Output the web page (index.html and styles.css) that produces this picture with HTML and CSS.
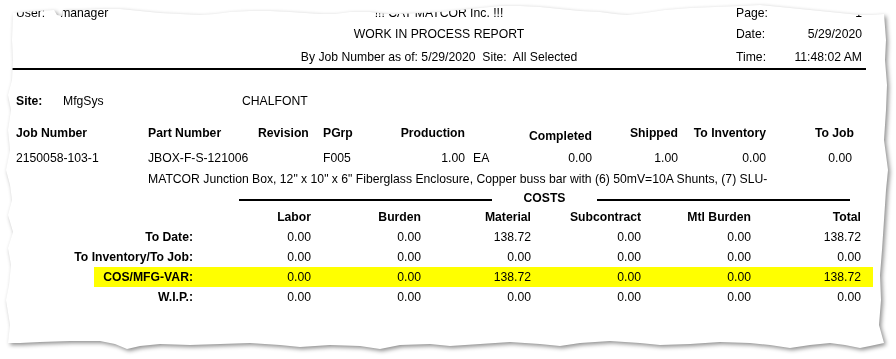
FILE: index.html
```html
<!DOCTYPE html>
<html lang="en">
	<head>
		<meta charset="UTF-8" />
		<meta name="viewport" content="width=device-width, initial-scale=1.0" />
		<title>Work In Process Report</title>
		<link rel="stylesheet" href="styles.css">
	</head>
	<body>
		<div class="sheet">
			<div class="paper">
				<div class="head">
					<div class="user"><span>User:</span><span class="user-name">manager</span></div>
					<div class="title">!!! CAT MATCOR Inc. !!!</div>
					<div class="meta"><span>Page:</span><span>1</span></div>
					<div></div>
					<div class="title">WORK IN PROCESS REPORT</div>
					<div class="meta"><span>Date:</span><span>5/29/2020</span></div>
					<div></div>
					<div class="title">By Job Number as of: 5/29/2020&nbsp; Site:&nbsp; All Selected</div>
					<div class="meta"><span>Time:</span><span>11:48:02 AM</span></div>
				</div>
				<div class="rule"></div>

				<div class="site">
					<b>Site:</b>
					<span>MfgSys</span>
					<span>CHALFONT</span>
				</div>

				<div class="cols cols-head">
					<div>Job Number</div>
					<div>Part Number</div>
					<div>Revision</div>
					<div>PGrp</div>
					<div class="num">Production</div>
					<div></div>
					<div class="num low">Completed</div>
					<div class="num">Shipped</div>
					<div class="num">To Inventory</div>
					<div class="num">To Job</div>
				</div>
				<div class="cols cols-data">
					<div>2150058-103-1</div>
					<div>JBOX-F-S-121006</div>
					<div></div>
					<div>F005</div>
					<div class="num">1.00</div>
					<div class="uom">EA</div>
					<div class="num">0.00</div>
					<div class="num">1.00</div>
					<div class="num">0.00</div>
					<div class="num pad">0.00</div>
				</div>
				<div class="desc">MATCOR Junction Box, 12" x 10" x 6" Fiberglass Enclosure, Copper buss bar with (6) 50mV=10A Shunts, (7) SLU-</div>

				<div class="costs-title">
					<div class="costs-line"></div>
					<b>COSTS</b>
					<div class="costs-line"></div>
				</div>

				<div class="cost-row cost-head">
					<div></div>
					<div>Labor</div>
					<div>Burden</div>
					<div>Material</div>
					<div>Subcontract</div>
					<div>Mtl Burden</div>
					<div>Total</div>
				</div>
				<div class="cost-row">
					<b class="label">To Date:</b>
					<div>0.00</div><div>0.00</div><div>138.72</div><div>0.00</div><div>0.00</div><div>138.72</div>
				</div>
				<div class="cost-row">
					<b class="label">To Inventory/To Job:</b>
					<div>0.00</div><div>0.00</div><div>0.00</div><div>0.00</div><div>0.00</div><div>0.00</div>
				</div>
				<div class="cost-row hilite">
					<b class="label">COS/MFG-VAR:</b>
					<div>0.00</div><div>0.00</div><div>138.72</div><div>0.00</div><div>0.00</div><div>138.72</div>
				</div>
				<div class="cost-row">
					<b class="label">W.I.P.:</b>
					<div>0.00</div><div>0.00</div><div>0.00</div><div>0.00</div><div>0.00</div><div>0.00</div>
				</div>
			</div>
		</div>
	</body>
</html>
```

FILE: styles.css
```css
* {
	padding: 0;
	margin: 0;
	box-sizing: border-box;
}
body {
	width: 896px;
	height: 359px;
	overflow: hidden;
	background: #fff;
	font-family: "Liberation Sans", Arial, sans-serif;
	font-size: 12.2px;
	color: #000;
}
.sheet {
	filter: drop-shadow(2px 2px 2px rgba(0, 0, 0, 0.45));
}
.paper {
	height: 359px;
	padding-top: 3px;
	background: #fff;
	clip-path: polygon(
		13px 13px, 25px 12px, 40px 11px, 54px 10px, 57px 15px, 62px 16px, 63px 10px, 80px 10px, 100px 9px, 120px 9px,
		140px 11px, 160px 13px, 180px 14px, 200px 15px, 215px 14px, 230px 12px, 250px 11px, 270px 11px, 290px 12px,
		305px 13px, 320px 14px, 335px 14px, 350px 12px, 370px 12px, 385px 14px, 400px 14px, 420px 13px, 440px 12px,
		460px 10px, 480px 8px, 500px 6px, 520px 6px, 540px 7px, 560px 9px, 580px 11px, 600px 12px, 615px 14px,
		627px 15px, 645px 13px, 665px 10px, 690px 8px, 715px 7px, 740px 6px, 760px 5px, 780px 7px, 800px 9px,
		820px 11px, 840px 13px, 860px 15px, 872px 15px, 884px 14px,
		886px 40px, 885px 60px, 887px 85px, 886px 110px, 884px 140px, 888px 170px, 886px 190px, 884px 220px,
		882px 250px, 880px 275px, 881px 300px, 879px 325px, 884px 343px,
		870px 346px, 860px 348px, 845px 345px, 830px 343px, 810px 345px, 790px 348px, 770px 345px, 750px 343px,
		720px 342px, 690px 344px, 660px 345px, 640px 343px, 610px 341px, 580px 343px, 560px 346px, 540px 344px,
		510px 342px, 480px 344px, 450px 346px, 430px 344px, 400px 345px, 380px 349px, 360px 346px, 330px 345px,
		300px 347px, 280px 345px, 250px 343px, 220px 344px, 190px 345px, 160px 344px, 140px 346px, 127px 349px,
		115px 344px, 100px 341px, 70px 341px, 40px 342px, 20px 343px, 8px 343px,
		10px 325px, 6px 300px, 9px 285px, 11px 265px, 8px 248px, 13px 232px, 8px 215px, 12px 200px, 10px 185px,
		6px 170px, 10px 150px, 8px 130px, 11px 110px, 8px 95px, 12px 80px, 13px 60px, 12px 40px
	);
}

/* report header */
.head {
	display: grid;
	grid-template-columns: 130px 1fr 130px;
	grid-template-rows: 20px 21px 23px;
	align-items: end;
	width: 854px;
	margin-left: 12px;
	line-height: 20px;
	white-space: nowrap;
}
.user {
	padding-left: 4px;
}
.user-name {
	margin-left: 15px;
}
.title {
	text-align: center;
}
.meta {
	display: flex;
	justify-content: space-between;
	padding-right: 4px;
}
.rule {
	width: 854px;
	height: 2px;
	margin: 1px 0 0 12px;
	background: #000;
}

.site {
	display: grid;
	grid-template-columns: 47px 179px auto;
	margin-top: 21px;
	padding-left: 16px;
	line-height: 20px;
}

/* job lines */
.cols {
	display: grid;
	grid-template-columns: 132px 110px 65px 57px 85px 45px 82px 86px 88px 88px;
	grid-template-rows: 20px;
	margin-left: 16px;
	line-height: 20px;
	white-space: nowrap;
}
.cols-head {
	margin-top: 12px;
	font-weight: bold;
}
.cols-data {
	margin-top: 5px;
}
.num {
	text-align: right;
}
.low {
	padding-top: 3px;
}
.pad {
	padding-right: 2px;
}
.uom {
	padding-left: 8px;
}
.desc {
	margin-top: 1px;
	padding-left: 148px;
	line-height: 20px;
	white-space: nowrap;
}

/* costs block */
.costs-title {
	display: grid;
	grid-template-columns: 253px 1fr 253px;
	width: 611px;
	height: 18px;
	margin-left: 239px;
	line-height: 18px;
	text-align: center;
}
.costs-line {
	align-self: center;
	height: 2px;
	margin-top: 4px;
	background: #000;
}
.cost-row {
	display: grid;
	grid-template-columns: 99px 118px repeat(5, 110px) 11px;
	width: 779px;
	margin-left: 94px;
	line-height: 20px;
	text-align: right;
	white-space: nowrap;
}
.cost-row .label {
	justify-self: end;
}
.cost-head {
	font-weight: bold;
}
.hilite {
	background: #ffff00;
}
```
